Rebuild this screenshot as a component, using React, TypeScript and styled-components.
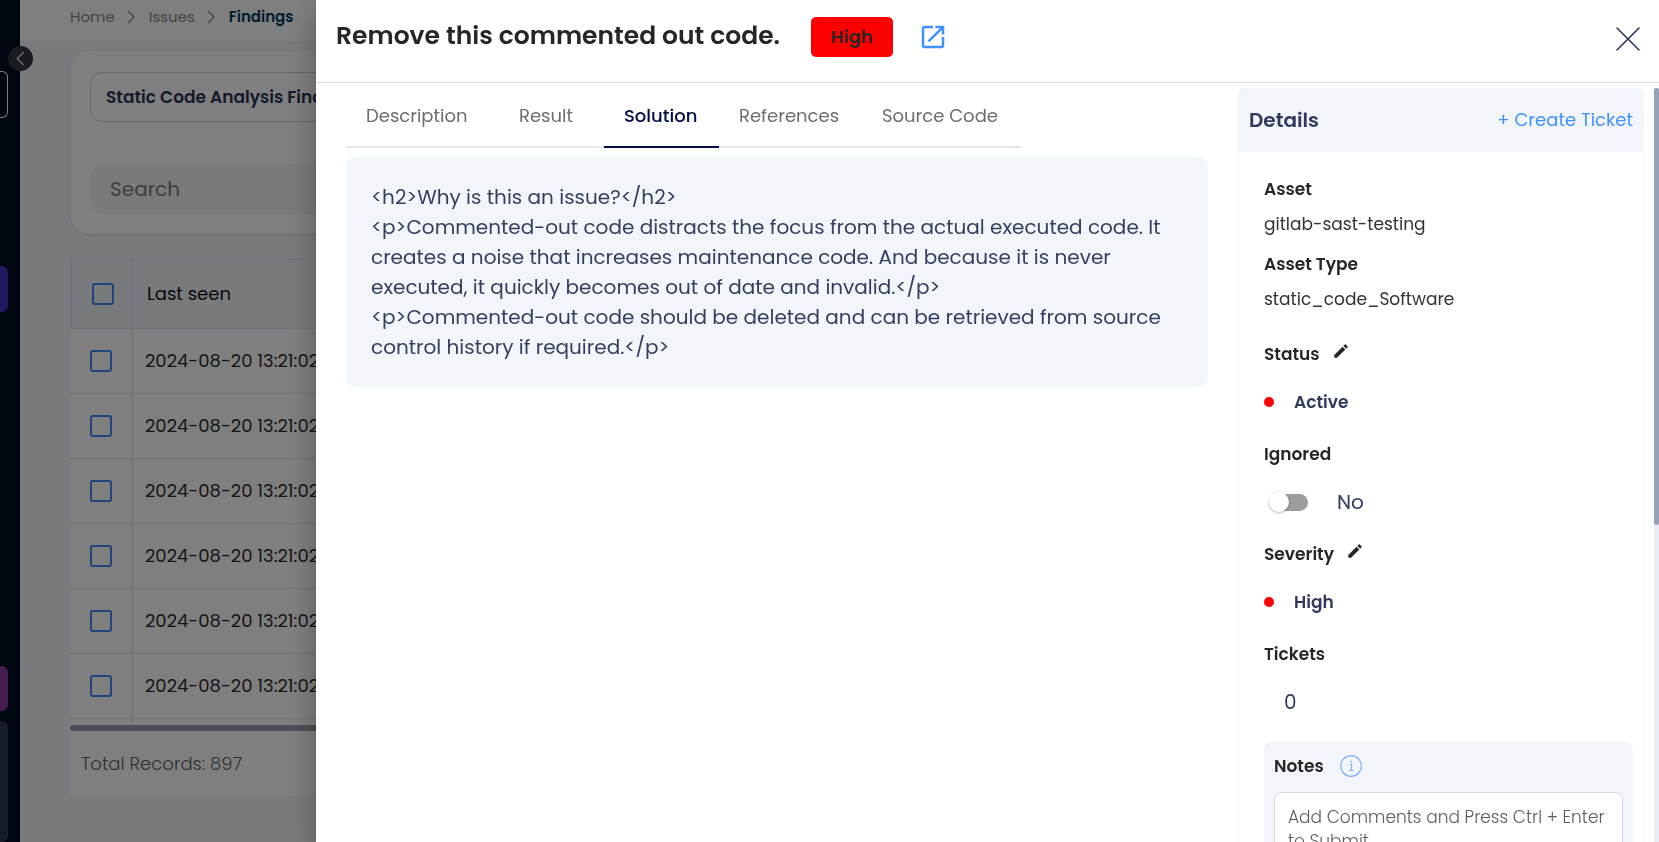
import React, { useState } from "react";
import styled, { createGlobalStyle } from "styled-components";

const GlobalStyle = createGlobalStyle`
  *, *::before, *::after { box-sizing: border-box; }
  body {
    margin: 0;
    background: #f3f5fa;
    font-family: Poppins, Inter, "Open Sans", sans-serif;
    color: #262626;
  }
  button, input, select, textarea { font: inherit; color: inherit; }
  h1, h2, h3, p, dl, dd, dt, ol { margin: 0; padding: 0; }
`;

/* ---------- Page behind the drawer ---------- */

const Page = styled.div`
  display: flex;
  height: 100vh;
  overflow: hidden;
`;

const Sidebar = styled.nav`
  position: relative;
  flex: none;
  width: 20px;
  background: #000c1e;
  display: flex;
  flex-direction: column;
  padding-top: 71px;
`;

const SideBlock = styled.div<{ $height?: number; $top?: number; $fill?: string; $outlined?: boolean }>`
  width: 8px;
  height: ${(p) => (p.$height ? `${p.$height}px` : "auto")};
  flex: ${(p) => (p.$height ? "none" : "1")};
  margin-top: ${(p) => p.$top ?? 0}px;
  background: ${(p) => p.$fill ?? "transparent"};
  border: ${(p) => (p.$outlined ? "1px solid #ffffff" : "0")};
  border-left: 0;
  border-radius: 0 6px 6px 0;
`;

const CollapseButton = styled.button`
  position: absolute;
  z-index: 1;
  top: 46px;
  left: 8px;
  width: 25px;
  height: 25px;
  padding: 0;
  border: 0;
  border-radius: 50%;
  background: #343643;
  display: grid;
  place-items: center;
`;

const Main = styled.main`
  flex: 1;
  min-width: 0;
  display: flex;
  flex-direction: column;
`;

const Breadcrumbs = styled.nav`
  flex: none;
  height: 41px;
  padding: 0 50px 8px;
  background: #ffffff;

  ol {
    display: flex;
    align-items: center;
    gap: 10px;
    height: 100%;
    list-style: none;
    font-size: 15px;
    line-height: 24px;
  }
  li {
    display: flex;
    align-items: center;
    gap: 10px;
  }
`;

const Crumb = styled.a<{ $current?: boolean }>`
  color: ${(p) => (p.$current ? "#00395f" : "#85878c")};
  font-weight: ${(p) => (p.$current ? 600 : 400)};
  text-decoration: none;
`;

const Content = styled.div`
  padding: 10px 50px 46px;
  display: flex;
  flex-direction: column;
  gap: 25px;
`;

const FilterCard = styled.section`
  height: 183px;
  padding: 21px 20px 20px;
  display: flex;
  flex-direction: column;
  justify-content: space-between;
  background: #ffffff;
  border-radius: 20px;
  box-shadow: 0 1px 3px rgba(0, 0, 0, 0.12);
`;

const CategorySelect = styled.select`
  width: 360px;
  height: 50px;
  padding: 0 15px;
  appearance: none;
  background: #ffffff;
  border: 1px solid #c9ccdb;
  border-radius: 12px;
  color: #2b3556;
  font-size: 17px;
  font-weight: 600;
`;

const SearchInput = styled.input`
  width: 100%;
  height: 50px;
  padding: 0 20px;
  border: 0;
  border-radius: 14px;
  background: #f1f4f7;
  font-size: 20px;
  &::placeholder { color: #7d7d7d; opacity: 1; }
`;

const TableCard = styled.section`
  background: #ffffff;
`;

const FindingsTable = styled.table`
  width: 100%;
  border-collapse: separate;
  border-spacing: 0;
  table-layout: fixed;
  font-size: 18px;
  line-height: 24px;
  text-align: left;
  color: #2c2c2c;

  th, td {
    padding: 0 12px;
    border-bottom: 1px solid #d7e3f5;
    font-weight: 400;
    white-space: nowrap;
  }
  th {
    height: 70px;
    padding-left: 14px;
    background: #f3f5fa;
    border-top: 1px solid #dfe9f6;
    color: #111111;
  }
  td { height: 65px; }
  th:first-child, td:first-child {
    width: 63px;
    padding: 0 0 0 20px;
    border-right: 1px solid #d7e3f5;
  }
  th:first-child { border-left: 2px solid #d9e6f5; }
  tr:last-child td { height: 6px; border-bottom: 0; }
`;

const RowCheck = styled.input`
  display: block;
  appearance: none;
  width: 22px;
  height: 22px;
  margin: 0;
  border: 2px solid #4089f7;
  border-radius: 3px;
  &:checked { background: #4089f7; }
`;

const HorizontalBar = styled.div`
  height: 6px;
  border-radius: 3px;
  background: #979fb3;
`;

const TableFooter = styled.p`
  padding: 21px 11px 20px;
  color: #5f5f5f;
  font-size: 18px;
  font-weight: 300;
  line-height: 24px;
`;

const Backdrop = styled.div`
  position: fixed;
  z-index: 2;
  inset: 0;
  background: rgba(0, 0, 0, 0.5);
`;

/* ---------- Drawer ---------- */

const Drawer = styled.section`
  position: fixed;
  z-index: 3;
  inset: 0 0 0 316px;
  display: flex;
  flex-direction: column;
  background: #ffffff;
  box-shadow: 0 8px 10px -5px rgba(0, 0, 0, 0.2), 0 16px 24px 2px rgba(0, 0, 0, 0.14),
    0 6px 30px 5px rgba(0, 0, 0, 0.12);
`;

const DrawerHeader = styled.header`
  flex: none;
  height: 83px;
  padding: 0 16px 8px 20px;
  display: flex;
  align-items: center;
  border-bottom: 1px solid #dddddd;
`;

const DrawerTitle = styled.h1`
  padding-bottom: 2px;
  font-size: 25px;
  font-weight: 600;
  line-height: 36px;
  white-space: nowrap;
`;

const SeverityBadge = styled.span`
  width: 82px;
  margin: 0 25px 0 31px;
  border-radius: 5px;
  background: #ff0000;
  font-size: 18px;
  font-weight: 600;
  line-height: 40px;
  text-align: center;
`;

const IconLink = styled.a`
  display: flex;
  color: #4190ff;
`;

const IconButton = styled.button`
  display: flex;
  padding: 0;
  border: 0;
  background: none;
  cursor: pointer;
`;

const CloseButton = styled(IconButton)`
  margin: 4px 0 0 auto;
  color: #2b3658;
`;

const DrawerBody = styled.div`
  flex: 1;
  min-height: 0;
  padding-top: 5px;
  display: grid;
  grid-template-columns: minmax(0, 1fr) 406px 5px;
  column-gap: 10px;
`;

const FindingColumn = styled.div`
  padding: 0 20px 0 30px;
`;

const TabList = styled.div`
  display: inline-flex;
  height: 60px;
  margin-bottom: 9px;
  border-bottom: 2px solid #e2e7f1;
`;

const Tab = styled.button<{ $active?: boolean; $width: number }>`
  width: ${(p) => p.$width}px;
  height: 60px;
  padding: 0 20px 4px;
  border: 0;
  border-bottom: 2px solid ${(p) => (p.$active ? "#000f44" : "transparent")};
  background: none;
  color: ${(p) => (p.$active ? "#000f44" : "#6d6d6d")};
  font-size: 18px;
  font-weight: ${(p) => (p.$active ? 500 : 400)};
  text-align: left;
  white-space: nowrap;
  cursor: pointer;
`;

const SolutionBox = styled.div`
  padding: 25px;
  border-radius: 10px;
  background: #f2f5fa;
  color: #34405f;
  font-size: 20px;
  line-height: 30px;
  white-space: pre-line;
`;

const DetailsPanel = styled.aside`
  min-height: 0;
  overflow: hidden;
  border: 1px solid #f2f5fa;
  border-bottom: 0;
  border-radius: 6px 6px 0 0;
`;

const DetailsHeader = styled.header`
  height: 63px;
  padding: 0 10px 2px;
  display: flex;
  align-items: center;
  justify-content: space-between;
  background: #f2f5fa;
`;

const DetailsTitle = styled.h2`
  color: #2f3b5e;
  font-size: 20px;
  font-weight: 600;
`;

const TextButton = styled.button`
  padding: 0;
  border: 0;
  background: none;
  color: #4190ff;
  font-size: 18px;
  cursor: pointer;
`;

const DetailsContent = styled.div`
  padding: 25px 10px 0 25px;
`;

const AssetList = styled.dl`
  margin-bottom: 13px;
  font-size: 17px;
  line-height: 24px;
  dt { font-weight: 600; }
  dd { margin: 0; padding: 11px 0 16px; color: #333333; }
`;

const Field = styled.div`
  height: 100px;
`;

const FieldLabel = styled.h3`
  display: flex;
  align-items: center;
  gap: 12px;
  height: 28px;
  margin-bottom: 20px;
  font-size: 17px;
  font-weight: 600;

  button { padding-bottom: 6px; }
`;

const FieldValue = styled.div<{ $strong?: boolean; $indent?: number }>`
  display: flex;
  align-items: center;
  height: 28px;
  padding-left: ${(p) => p.$indent ?? 0}px;
  color: #2f3b5e;
  font-size: ${(p) => (p.$strong ? 17 : 20)}px;
  font-weight: ${(p) => (p.$strong ? 600 : 400)};
`;

const Dot = styled.span`
  width: 10px;
  height: 10px;
  margin-right: 20px;
  border-radius: 50%;
  background: #ff0000;
`;

const ToggleLabel = styled.label`
  display: flex;
  align-items: center;
  gap: 29px;
  padding-left: 10px;
`;

const Toggle = styled.input`
  appearance: none;
  width: 34px;
  height: 17px;
  margin: 0;
  border-radius: 9px;
  background: #9c9c9c;
  display: flex;
  align-items: center;

  &::before {
    content: "";
    flex: none;
    width: 20px;
    height: 20px;
    margin-left: -5px;
    border-radius: 50%;
    background: #ffffff;
    box-shadow: 0 1px 3px rgba(0, 0, 0, 0.3);
  }
  &:checked { background: #8ab8ff; }
  &:checked::before { margin-left: 19px; background: #4190ff; }
`;

const NotesCard = styled.section`
  margin-top: 2px;
  padding: 9px 10px 20px;
  border-radius: 8px;
  background: #f2f5fa;
`;

const NotesHeading = styled.label`
  display: flex;
  align-items: center;
  gap: 16px;
  height: 29px;
  margin-bottom: 12px;
  font-size: 17px;
  font-weight: 600;
`;

const NotesInput = styled.textarea`
  display: block;
  width: 100%;
  height: 100px;
  padding: 12px 13px;
  border: 1px solid #d3daea;
  border-radius: 8px;
  background: #ffffff;
  resize: none;
  font-size: 17px;
  font-weight: 300;
  line-height: 24px;
  &::placeholder { color: #5c5c5c; opacity: 1; }
`;

const ScrollTrack = styled.div`
  background: #e9ecf5;
`;

const ScrollThumb = styled.div`
  height: 58%;
  border-radius: 3px;
  background: #97a0ba;
`;

/* ---------- Icons ---------- */

const Chevron = ({ left, size = 14, color }: { left?: boolean; size?: number; color: string }) => (
  <svg width={size} height={size} viewBox="0 0 14 14" fill="none" stroke={color} strokeWidth="1.3" aria-hidden="true">
    <path d={left ? "M10 1 4 7l6 6" : "M3 1l6 6-6 6"} />
  </svg>
);

const OpenInNew = () => (
  <svg width="30" height="30" viewBox="0 0 24 24" fill="currentColor" aria-hidden="true">
    <path d="M19 19H5V5h7V3H5c-1.11 0-2 .9-2 2v14c0 1.1.89 2 2 2h14c1.1 0 2-.9 2-2v-7h-2v7zM14 3v2h3.59l-9.83 9.83 1.41 1.41L19 6.41V10h2V3h-7z" />
  </svg>
);

const CloseIcon = () => (
  <svg width="30" height="30" viewBox="0 0 30 30" fill="none" stroke="currentColor" strokeWidth="1.6" strokeLinecap="round" aria-hidden="true">
    <path d="M4 4l22 22M26 4 4 26" />
  </svg>
);

const Pencil = () => (
  <svg width="18" height="18" viewBox="0 0 24 24" fill="currentColor" aria-hidden="true">
    <path d="M3 17.25V21h3.75L17.81 9.94l-3.75-3.75L3 17.25zM20.71 7.04c.39-.39.39-1.02 0-1.41l-2.34-2.34a.9959.9959 0 0 0-1.41 0l-1.83 1.83 3.75 3.75 1.83-1.83z" />
  </svg>
);

const InfoIcon = () => (
  <svg width="22" height="22" viewBox="0 0 22 22" fill="none" stroke="#82b1fb" aria-hidden="true">
    <circle cx="11" cy="11" r="10.3" strokeWidth="1.2" />
    <path d="M9.5 9.5h2v6M9 15.5h4.5" strokeWidth="1.1" />
    <circle cx="11.2" cy="6.8" r="1" fill="#82b1fb" stroke="none" />
  </svg>
);

/* ---------- Data ---------- */

const tabs = [
  { name: "Description", width: 153 },
  { name: "Result", width: 105 },
  { name: "Solution", width: 115 },
  { name: "References", width: 143 },
  { name: "Source Code", width: 159 },
];

const rows = Array.from({ length: 6 }, () => "2024-08-20 13:21:02");

const solution = `<h2>Why is this an issue?</h2>
<p>Commented-out code distracts the focus from the actual executed code. It creates a noise that increases maintenance code. And because it is never executed, it quickly becomes out of date and invalid.</p>
<p>Commented-out code should be deleted and can be retrieved from source control history if required.</p>`;

export default function App() {
  const [activeTab, setActiveTab] = useState("Solution");
  const [ignored, setIgnored] = useState(false);

  return (
    <>
      <GlobalStyle />
      <Page>
        <Sidebar aria-label="Primary">
          <SideBlock $height={47} $outlined />
          <SideBlock $height={46} $top={148} $fill="#4632c0" />
          <SideBlock $height={45} $top={354} $fill="#883c9c" />
          <SideBlock $top={10} $fill="#2e3855" />
          <CollapseButton aria-label="Collapse sidebar">
            <Chevron left size={15} color="#d8d8d8" />
          </CollapseButton>
        </Sidebar>
        <Main>
          <Breadcrumbs aria-label="Breadcrumb">
            <ol>
              <li><Crumb href="#home">Home</Crumb><Chevron color="#85878c" /></li>
              <li><Crumb href="#issues">Issues</Crumb><Chevron color="#85878c" /></li>
              <li><Crumb href="#findings" $current>Findings</Crumb></li>
            </ol>
          </Breadcrumbs>
          <Content>
            <FilterCard>
              <CategorySelect aria-label="Finding category">
                <option>Static Code Analysis Findings</option>
              </CategorySelect>
              <SearchInput aria-label="Search" placeholder="Search" />
            </FilterCard>
            <TableCard>
              <FindingsTable>
                <thead>
                  <tr>
                    <th><RowCheck type="checkbox" aria-label="Select all" /></th>
                    <th>Last seen</th>
                  </tr>
                </thead>
                <tbody>
                  {rows.map((seen, i) => (
                    <tr key={i}>
                      <td><RowCheck type="checkbox" aria-label={`Select row ${i + 1}`} /></td>
                      <td>{seen}</td>
                    </tr>
                  ))}
                  <tr><td /><td /></tr>
                </tbody>
              </FindingsTable>
              <HorizontalBar />
              <TableFooter>Total Records: 897</TableFooter>
            </TableCard>
          </Content>
        </Main>
      </Page>
      <Backdrop />
      <Drawer role="dialog" aria-labelledby="finding-title">
        <DrawerHeader>
          <DrawerTitle id="finding-title">Remove this commented out code.</DrawerTitle>
          <SeverityBadge>High</SeverityBadge>
          <IconLink href="#open" aria-label="Open in new tab"><OpenInNew /></IconLink>
          <CloseButton aria-label="Close"><CloseIcon /></CloseButton>
        </DrawerHeader>
        <DrawerBody>
          <FindingColumn>
            <TabList role="tablist">
              {tabs.map((tab) => (
                <Tab
                  key={tab.name}
                  role="tab"
                  aria-selected={tab.name === activeTab}
                  $active={tab.name === activeTab}
                  $width={tab.width}
                  onClick={() => setActiveTab(tab.name)}
                >
                  {tab.name}
                </Tab>
              ))}
            </TabList>
            <SolutionBox role="tabpanel">{solution}</SolutionBox>
          </FindingColumn>
          <DetailsPanel>
            <DetailsHeader>
              <DetailsTitle>Details</DetailsTitle>
              <TextButton>+ Create Ticket</TextButton>
            </DetailsHeader>
            <DetailsContent>
              <AssetList>
                <dt>Asset</dt>
                <dd>gitlab-sast-testing</dd>
                <dt>Asset Type</dt>
                <dd>static_code_Software</dd>
              </AssetList>
              <Field>
                <FieldLabel>Status <IconButton aria-label="Edit status"><Pencil /></IconButton></FieldLabel>
                <FieldValue $strong><Dot />Active</FieldValue>
              </Field>
              <Field>
                <FieldLabel>Ignored</FieldLabel>
                <FieldValue>
                  <ToggleLabel>
                    <Toggle type="checkbox" role="switch" checked={ignored} onChange={(e) => setIgnored(e.target.checked)} />
                    {ignored ? "Yes" : "No"}
                  </ToggleLabel>
                </FieldValue>
              </Field>
              <Field>
                <FieldLabel>Severity <IconButton aria-label="Edit severity"><Pencil /></IconButton></FieldLabel>
                <FieldValue $strong><Dot />High</FieldValue>
              </Field>
              <Field>
                <FieldLabel>Tickets</FieldLabel>
                <FieldValue $indent={20}>0</FieldValue>
              </Field>
              <NotesCard>
                <NotesHeading htmlFor="notes">Notes <InfoIcon /></NotesHeading>
                <NotesInput id="notes" placeholder="Add Comments and Press Ctrl + Enter to Submit" />
              </NotesCard>
            </DetailsContent>
          </DetailsPanel>
          <ScrollTrack><ScrollThumb /></ScrollTrack>
        </DrawerBody>
      </Drawer>
    </>
  );
}
